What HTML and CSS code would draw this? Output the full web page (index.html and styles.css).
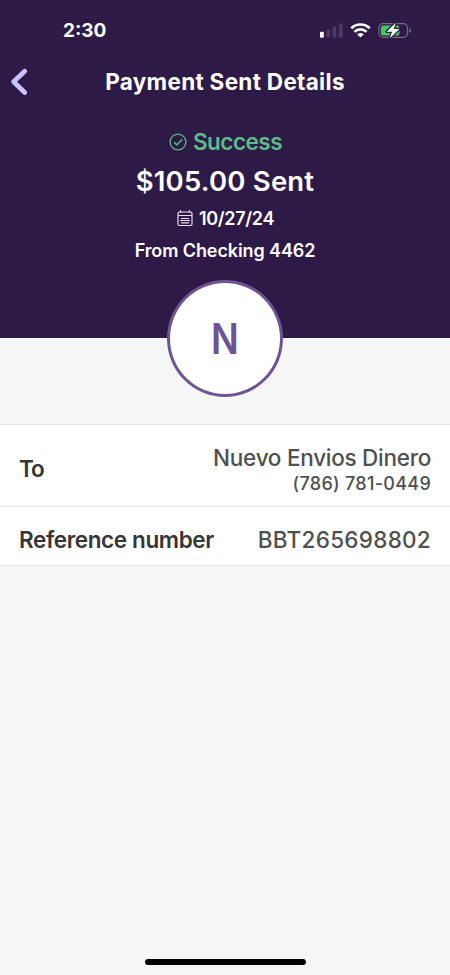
FILE: index.html
```html
<!DOCTYPE html>
<html lang="en">
<head>
<meta charset="utf-8">
<meta name="viewport" content="width=device-width, initial-scale=1">
<title>Payment Sent Details</title>
<link rel="stylesheet" href="styles.css">
</head>
<body>
<div class="screen">
  <header class="hero">
    <div class="status">
      <span class="time">2:30</span>
      <svg class="indicators" width="92" height="20" viewBox="0 0 92 20">
        <rect x="0" y="11.800" width="3.800" height="6" rx="1" fill="#fff"/>
        <g fill="#4c3965"><rect x="6.500" y="9.500" width="3.700" height="8.300" rx="1"/><rect x="12.700" y="6.500" width="3.700" height="11.300" rx="1"/><rect x="19" y="3.300" width="3.700" height="14.500" rx="1"/></g>
        <g fill="none" stroke="#fff" stroke-width="2.700"><path d="M31.300 8.300a13 13 0 0 1 18.400 0"/><path d="M34.500 11.900a8.500 8.500 0 0 1 12 0"/></g>
        <path d="M40.500 17.600l-3.200-3.200a4.600 4.600 0 0 1 6.400 0z" fill="#fff"/>
        <rect x="58.900" y="3.600" width="28.600" height="13.700" rx="4.300" fill="none" stroke="#78698a" stroke-width="1.200"/>
        <path d="M89.200 8.200v4.800q1.900-.6 1.900-2.400t-1.900-2.400z" fill="#78698a"/>
        <rect x="60.900" y="5.400" width="18.600" height="10.200" rx="2.700" fill="#41c95c"/>
        <path d="M75.800 2.700L66.600 11.700h5.500L69.800 18.300l9.700-9.300h-5.800z" fill="#fff" stroke="#2e1a47" stroke-width="2.400" paint-order="stroke" stroke-linejoin="round"/>
      </svg>
    </div>
    <nav class="navbar">
      <svg class="back" width="20" height="30" viewBox="0 0 20 30"><path d="M15.700 4.200L4.600 14.700l11.100 10.800" fill="none" stroke="#cbc3fa" stroke-width="4.800" stroke-linecap="round" stroke-linejoin="round"/></svg>
      <h1 class="title">Payment Sent Details</h1>
    </nav>
    <div class="summary">
      <div class="line result">
        <svg width="18" height="18" viewBox="0 0 18 18" fill="none" stroke="#5dba8b" stroke-width="1.300"><circle cx="9" cy="9" r="7.900"/><path d="M5.200 9.300l2.600 2.600 5.300-5.500" stroke-width="1.500"/></svg>
        <span class="result-text">Success</span>
      </div>
      <div class="line"><span class="amount">$105.00 Sent</span></div>
      <div class="line date">
        <svg class="calendar" width="16" height="17" viewBox="0 0 16 17" fill="none" stroke="#e6dcf0" stroke-width="1.200"><rect x="1" y="2" width="14" height="13.500" rx="1.500"/><path d="M1 5.500h14M3.500.3v2.500M12.500.3v2.500M4 8.500h8M3 10.500h10M4 12.900h8"/></svg>
        <span class="date-text">10/27/24</span>
      </div>
      <div class="line"><span class="source">From Checking 4462</span></div>
    </div>
    <div class="avatar"><span class="initial">N</span></div>
  </header>
  <main class="details">
    <div class="row recipient">
      <span class="label to">To</span>
      <div class="value"><div class="name">Nuevo Envios Dinero</div><div class="phone">(786) 781-0449</div></div>
    </div>
    <div class="row reference">
      <span class="label ref">Reference number</span>
      <span class="number">BBT265698802</span>
    </div>
  </main>
  <div class="home-bar"></div>
</div>
</body>
</html>
```
FILE: styles.css
```css
* { box-sizing: border-box; }
body { margin: 0; font-family: Inter, "Liberation Sans", sans-serif; background: #f6f6f6; }
.screen { width: 450px; height: 975px; display: flex; flex-direction: column; overflow: hidden; }
.hero { position: relative; height: 338px; flex: none; background: #2e1a47; color: #fff; }
.status { height: 60px; padding: 20px 38px 0 63px; display: flex; justify-content: space-between; align-items: flex-start; }
.time { font-size: 19px; font-weight: 700; line-height: 22px; }
.indicators { display: block; }
.navbar { height: 44px; display: grid; grid-template-columns: 40px 1fr 40px; align-items: center; }
.back { margin-left: 9px; }
.title { margin: 0; font-size: 22.5px; line-height: 28px; font-weight: 700; letter-spacing: 0.3px; text-align: center; white-space: nowrap; }
.summary { padding-top: 22px; display: grid; grid-template-rows: 32px 46px 28px 37px; }
.line { display: flex; justify-content: center; align-items: center; white-space: nowrap; }
.result { gap: 6px; padding-left: 1px; color: #5dba8b; }
.result-text { font-size: 22.5px; line-height: 26px; font-weight: 600; letter-spacing: -0.5px; }
.amount { font-size: 27.5px; font-weight: 600; letter-spacing: 0.2px; }
.date { gap: 6px; padding-left: 1px; }
.date-text { font-size: 18px; font-weight: 600; letter-spacing: -0.3px; }
.source { font-size: 18px; font-weight: 600; letter-spacing: -0.1px; }
.avatar { position: absolute; left: 167px; top: 280px; width: 116px; height: 117px; border: 3px solid #6e5494; border-radius: 50%; background: #fff; color: #6e5494; display: flex; align-items: center; justify-content: center; font-size: 42px; font-weight: 600; }
.initial { transform: scaleX(0.87); }
.details { margin-top: 86px; border-top: 1px solid #e6e6e6; background: #fff; }
.row { display: flex; align-items: center; justify-content: space-between; padding: 0 19px; border-bottom: 1px solid #e6e6e6; color: #505050; white-space: nowrap; }
.recipient { height: 82px; padding-top: 9px; }
.reference { height: 59px; padding-top: 6px; }
.label { color: #363636; font-size: 22.5px; font-weight: 600; letter-spacing: -0.38px; }
.to { line-height: 26px; padding-bottom: 2px; letter-spacing: -1.2px; }
.value { text-align: right; }
.name { font-size: 22.5px; line-height: 27px; font-weight: 500; letter-spacing: -0.27px; }
.phone { font-size: 18px; line-height: 24px; padding-top: 1px; font-weight: 500; letter-spacing: 0.28px; }
.number { font-size: 22.5px; font-weight: 500; letter-spacing: 0.27px; }
.home-bar { width: 161px; height: 6px; margin: auto auto 10px; border-radius: 3px; background: #000; }
```
